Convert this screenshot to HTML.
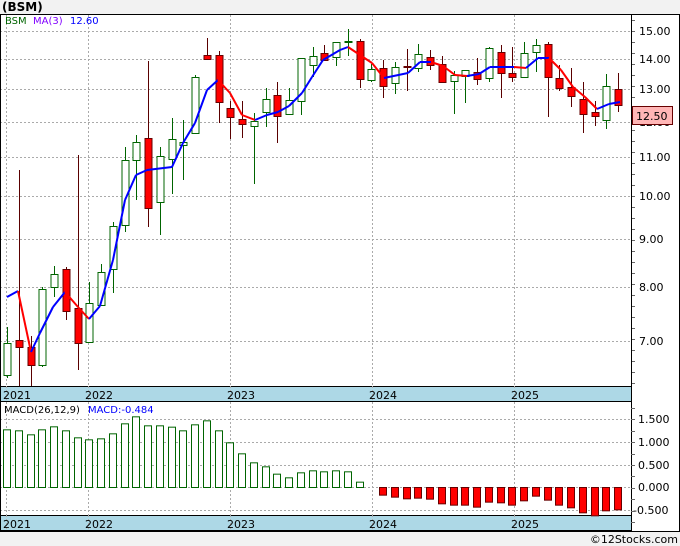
<!DOCTYPE html>
<html><head><meta charset="utf-8"><style>
body{margin:0;background:#f2f2f2;}
svg{display:block;font-family:"DejaVu Sans","Liberation Sans",sans-serif;}
</style></head><body>
<svg id="s" width="680" height="546" xmlns="http://www.w3.org/2000/svg"></svg>
<script>
var s=document.getElementById('s');var h='';
function L(x1,y1,x2,y2,c,w,d){h+='<line x1="'+x1+'" y1="'+y1+'" x2="'+x2+'" y2="'+y2+'" stroke="'+c+'" stroke-width="'+(w||1)+'"'+(d?' stroke-dasharray="'+d+'"':'')+'/>';}
function R(x,y,w,hh,f,st){h+='<rect x="'+x+'" y="'+y+'" width="'+w+'" height="'+hh+'" fill="'+f+'"'+(st?' stroke="'+st+'"':'')+'/>';}
function T(x,y,t,c,sz,extra){h+='<text x="'+x+'" y="'+y+'" fill="'+c+'" font-size="'+(sz||11)+'" '+(extra||'')+'>'+t+'</text>';}
R(0,0,680,546,'#f2f2f2');
R(0,14,680,517,'#fff');
T(2,11,'(BSM)','#000',12,'font-weight="bold"');
L(0,14.5,680,14.5,'#000');
var gy=[31,59,89,122,157,196,239,287,341];var gl=['15.00','14.00','13.00','12.00','11.00','10.00','9.00','8.00','7.00'];
gy.forEach(function(y,i){L(0,y+.5,631,y+.5,'#aaa',1,'2,2');T(639,y+4,gl[i],'#000',11);});
var vx=[6,88,230,372,514];
vx.forEach(function(x){L(x+.5,15,x+.5,386,'#aaa',1,'2,2');L(x+.5,402,x+.5,515,'#aaa',1,'2,2');});
for(var y=20;y<386;y+=11){L(631,y+.5,635,y+.5,'#666');}
L(631.5,15,631.5,531,'#000');
var C=[
['g',327,378,343,375],['r',170,386,340,347],['r',336,388,347,365],['g',287,367,289,365],['g',266,297,274,287],['r',267,320,269,311],['r',155,370,308,343],['g',282,342,303,342],['g',264,305,272,305],['g',222,293,226,269],
['g',147,232,160,225],['g',135,200,142,160],['r',61,227,138,208],['g',147,235,156,202],['g',118,194,139,159],['g',120,180,142,145],['g',75,133,77,133],['r',38,59,55,59],['r',51,123,55,102],['r',101,139,108,117],
['r',101,138,119,124],['g',113,184,121,126],['g',88,127,99,112],['r',82,143,95,116],['g',88,115,100,114],['g',58,115,58,101],['g',47,77,56,65],['r',45,60,53,60],['g',42,66,42,57],['g',29,56,41,42],
['r',39,88,41,79],['g',64,82,69,80],['r',60,98,68,86],['g',62,94,67,83],['r',49,91,66,67],['g',44,72,54,68],['r',50,70,57,65],['r',56,83,64,82],['g',71,114,75,81],['g',70,103,70,76],
['r',58,85,72,79],['g',47,82,48,78],['r',45,98,52,73],['r',47,82,73,77],['g',42,78,53,77],['g',39,72,45,52],['r',42,117,44,77],['r',65,91,78,88],['r',68,107,87,96],['r',82,133,99,114],
['r',101,126,112,116],['g',74,129,86,120],['r',73,112,89,105]];
C.forEach(function(c,i){var x=Math.round(7+11.75*i)+.5;var g=c[0]=='g';var col=g?'#006400':'#5a0000';
L(x,c[1],x,Math.min(c[2],386),col);
var b2=Math.max(c[4],c[3]+1);
R(x-3.5,c[3]+.5,7,Math.min(b2,386)-c[3],g?'#fff':'#f00',g?'#006400':'#600');});
var P=[[7,297],[18,291],[31,352],[40,333],[53,307],[65,292],[78,307],[89,319],[100,306],[113,260],[125,200],[136,175],[147,170],[172,167],[183,143],[195,123],[207,90],[218,80],[230,93],[242,115],[255,120],[267,115],[278,112],[289,106],[302,93],[312,77],[323,60],[340,50],[348,47],[372,63],[384,78],[408,73],[420,62],[431,62],[443,66],[455,75],[467,76],[479,74],[490,67],[502,67],[514,67],[526,68],[538,58],[549,58],[561,70],[573,87],[585,97],[597,109],[609,104],[620,102]];
for(var i=1;i<P.length;i++){var a=P[i-1],b=P[i];h+='<line x1="'+a[0]+'" y1="'+a[1]+'" x2="'+b[0]+'" y2="'+b[1]+'" stroke="'+(b[1]>a[1]+0.5?'#f00':'#00f')+'" stroke-width="2"/>';}
T(5,24,'BSM','#006400',10);T(33,24,'MA(3)','#8000ff',10);T(70,24,'12.60','#0000ff',10);
R(632.5,106.5,40,18,'#ffb6b6','#600');T(636,120,'12.50','#000',11);
function strip(y){R(0,y,631,16,'#add8e6');L(0,y+.5,631,y+.5,'#000');L(0,y+15.5,631,y+15.5,'#000');
var yr=['2021','2022','2023','2024','2025'];vx.forEach(function(x,i){L(x+.5,y,x+.5,y+16,'#aaa',1,'2,2');T(x-3,y+13,yr[i],'#000',11);});}
strip(386);strip(515);
var my=[['1.500',419],['1.000',442],['0.500',465],['0.000',487],['-0.500',510]];
my.forEach(function(m){L(0,m[1]+.5,631,m[1]+.5,'#aaa',1,'2,2');T(m[0][0]=='-'?633:638,m[1]+4,m[0],'#000',11);});
for(var y=408;y<531;y+=11.4){L(631,Math.round(y)+.5,635,Math.round(y)+.5,'#666');}
var G=[178,181,193,178,169,181,202,208,205,190,160,139,166,166,170,181,163,151,181,217,250,277,289,311,322,307,301,304,301,304,335];
G.forEach(function(z,i){var x=Math.round(7+11.75*i);var t=370+z/3;R(x-3.5,t+.5,7,487-t,'#fff','#006400');});
var Rd=[374,380,385,383,386,400,404,404,410,395,397,404,391,377,389,404,412,427,436,421,418];
Rd.forEach(function(z,i){var x=Math.round(7+11.75*(i+32));var b=370+z/3;R(x-3.5,487.5,7,b-487,'#f00','#600');});
T(4,413,'MACD(26,12,9)','#000',10);T(88,413,'MACD:-0.484','#0000ff',10);
L(0,531.5,680,531.5,'#000');L(679.5,14,679.5,531,'#000');L(0.5,14,0.5,531,'#000');
T(678,543,'©12Stocks.com','#000',11,'text-anchor="end"');
s.innerHTML=h;
</script>
</body></html>
